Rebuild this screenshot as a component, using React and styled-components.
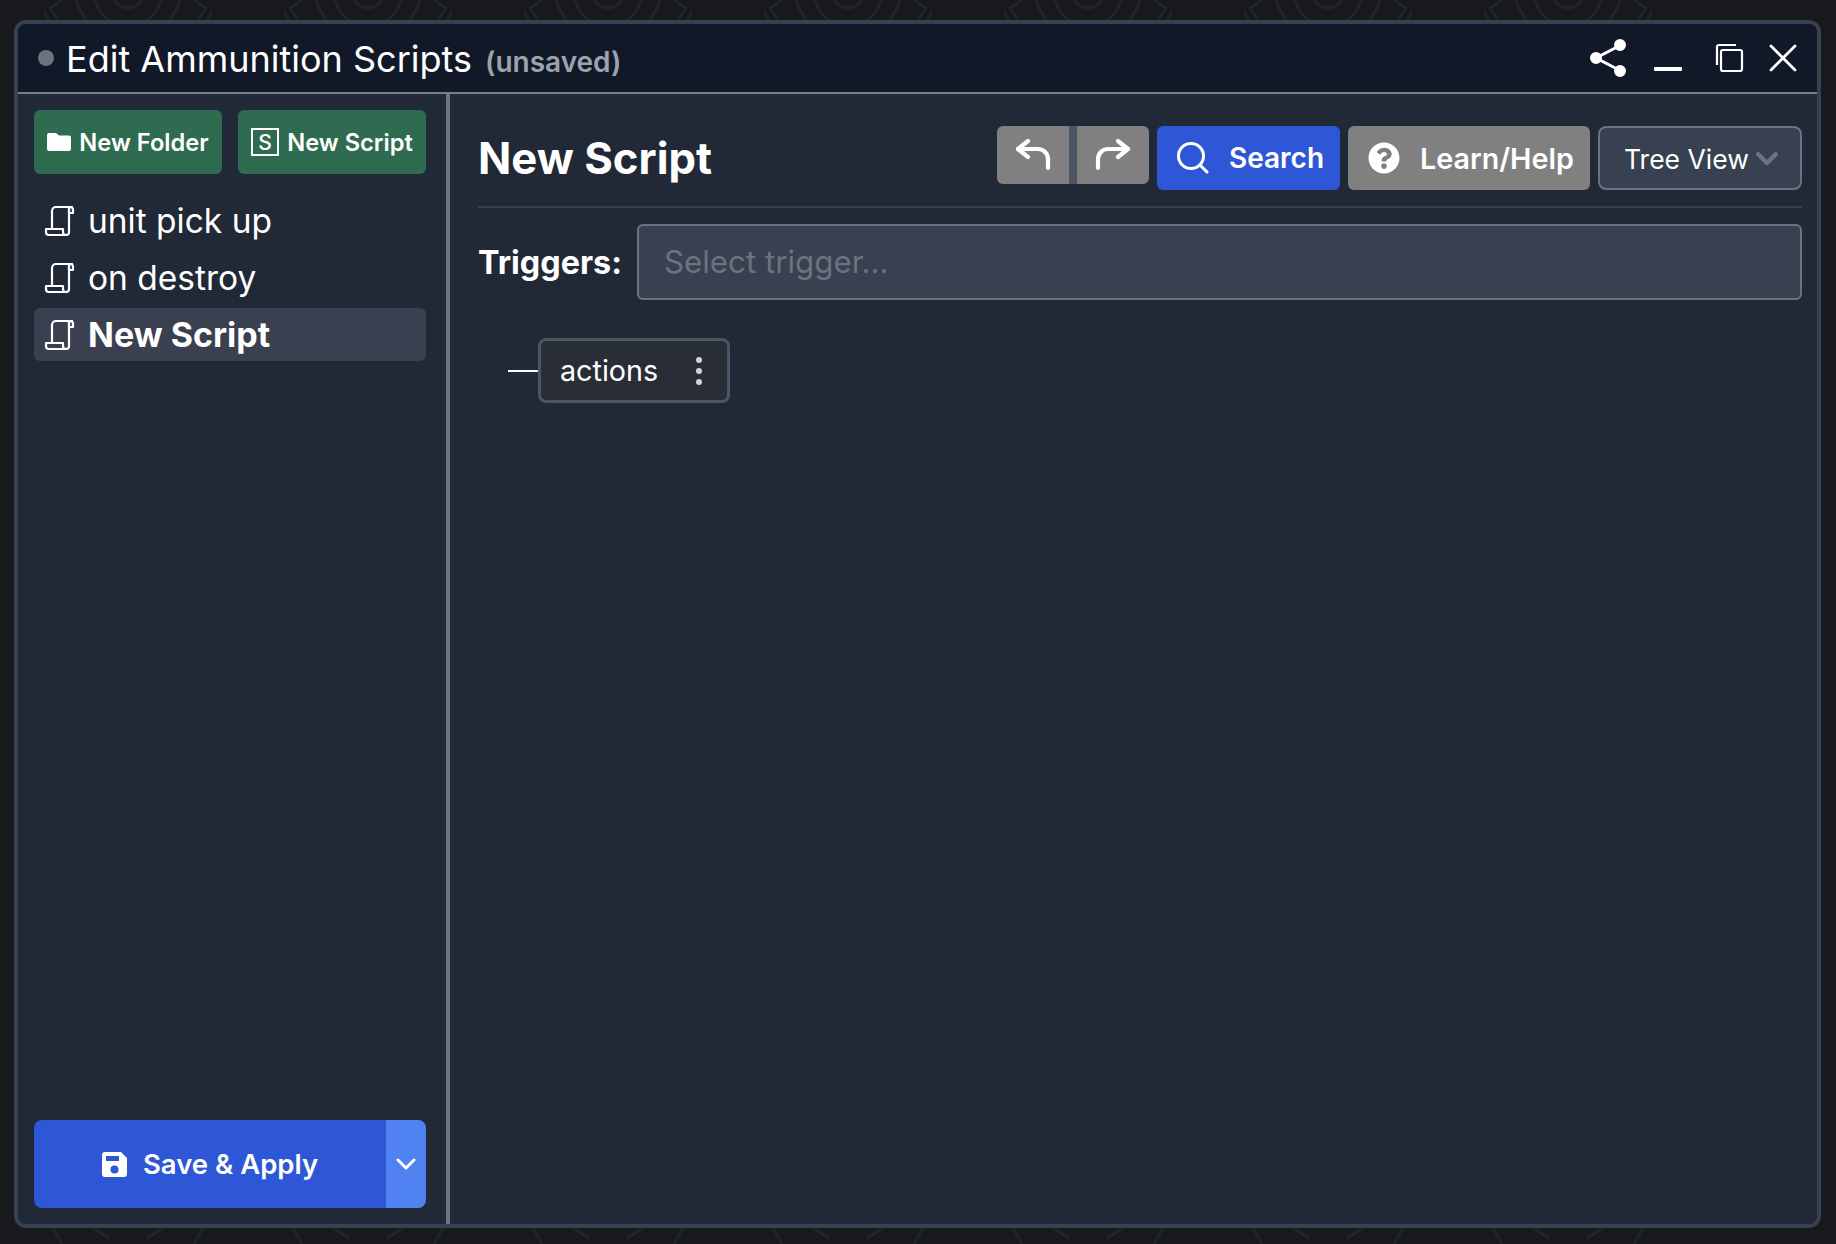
import React from "react";
import styled, { createGlobalStyle } from "styled-components";

const Global = createGlobalStyle`
  html, body { margin: 0; padding: 0; background: #17191c; }
  * { box-sizing: border-box; }
`;
const Page = styled.div`
  position: relative; width: 1836px; height: 1244px; padding: 20px 15px 16px 14px;
  font-family: Inter, "Liberation Sans", sans-serif; color: #fff; background: #17191c; overflow: hidden;
`;
const Pattern = styled.svg`position: absolute; inset: 0; width: 100%; height: 100%;`;
const Window = styled.div`
  position: relative; height: 100%; display: flex; flex-direction: column;
  border: 4px solid #374151; border-radius: 12px; background: #212836; overflow: hidden;
`;
const TitleBar = styled.header`
  height: 70px; flex: none; display: flex; align-items: center; padding: 0 20px 0 20px;
  background: #111827; border-bottom: 2px solid #7b7f85;
`;
const Dot = styled.span`width: 16px; height: 16px; border-radius: 50%; background: #6b7280; margin-right: 12px;`;
const Title = styled.h1`margin: 0; font-size: 36px; font-weight: 400; line-height: 44px; padding-top: 1px;`;
const Unsaved = styled.span`margin-left: 13px; font-size: 28px; font-weight: 600; color: #9ca3af; position: relative; top: 4px;`;
const WindowIcons = styled.div`margin-left: auto; display: flex; align-items: center;`;
const WindowIcon = styled.span`display: flex; margin-left: ${p => p.$ml}px;`;
const Body = styled.div`flex: 1; display: flex; min-height: 0;`;
const Sidebar = styled.aside`
  width: 432px; flex: none; display: flex; flex-direction: column; padding: 16px 20px 16px 16px;
  border-right: 4px solid #6b7280;
`;
const NewRow = styled.div`display: flex; gap: 16px; margin-bottom: 20px;`;
const GreenButton = styled.button`
  flex: 1; height: 64px; border: 0; border-radius: 6px; background: #2f6b50; color: #fff; padding: 0;
  display: flex; align-items: center; justify-content: center; gap: 8px;
  font: 600 23.700px Inter, sans-serif; white-space: nowrap;
`;
const SBox = styled.span`
  width: 28px; height: 28px; flex: none; border: 2px solid #fff; display: flex; align-items: center; justify-content: center;
  font-size: 21px; font-weight: 500;
`;
const Row = styled.div`
  height: 53px; margin-bottom: 4px; display: flex; align-items: center; gap: 12px; padding-left: 10px; border-radius: 6px;
  font-size: ${p => (p.$active ? 34 : 33.500)}px; font-weight: ${p => (p.$active ? 700 : 400)};
  background: ${p => (p.$active ? "#3a404f" : "transparent")};
`;
const Spacer = styled.div`flex: 1;`;
const Save = styled.div`height: 88px; display: flex; border-radius: 8px; overflow: hidden;`;
const SaveMain = styled.button`
  flex: 1; border: 0; background: #2d57d6; color: #fff; display: flex; align-items: center; justify-content: center; gap: 16px;
  font: 600 27.500px Inter, sans-serif; padding: 0;
`;
const SaveCaret = styled.button`width: 40px; border: 0; background: #5081f0; padding: 0; display: flex; align-items: center; justify-content: center;`;
const Main = styled.main`flex: 1; min-width: 0; padding: 32px 15px 0 28px;`;
const Head = styled.div`height: 82px; display: flex; align-items: flex-start; border-bottom: 2px solid #374151; margin-bottom: 16px;`;
const Heading = styled.h2`margin: 0; height: 64px; line-height: 66px; font-size: 43.700px; font-weight: 700;`;
const Tools = styled.div`margin-left: auto; display: flex; gap: 8px;`;
const UndoGroup = styled.div`display: flex; height: 58px; border-radius: 6px; overflow: hidden;`;
const UndoButton = styled.button`
  width: ${p => p.$w}px; border: 0; background: #808080; padding: 0; display: flex; align-items: center; justify-content: center;
`;
const Sep = styled.div`width: 8px; background: #4b5563;`;
const ActionButton = styled.button`
  height: 64px; width: ${p => p.$w}px; border: 0; border-radius: 6px; background: ${p => p.$bg}; color: #fff;
  display: flex; align-items: center; justify-content: center; gap: 20px; font: 600 ${p => p.$fs}px Inter, sans-serif; padding: 0 0 0 4px;
`;
const TreeSelect = styled.div`
  width: 204px; height: 64px; border: 2px solid #6b7280; border-radius: 8px; background: #374151;
  display: flex; align-items: center; gap: 7px; padding: 1px 0 0 24px; font-size: 26.500px;
`;
const TriggerRow = styled.div`display: flex; align-items: center; gap: 15px; margin-bottom: 38px;`;
const Label = styled.label`font-size: 32.300px; font-weight: 700;`;
const Input = styled.div`
  flex: 1; height: 76px; border: 2px solid #6b7280; border-radius: 6px; background: #3a404f;
  display: flex; align-items: center; padding-left: 25px; font-size: 31.300px; color: #6b7280;
`;
const TreeRow = styled.div`display: flex; align-items: center; padding-left: 30px;`;
const Line = styled.div`width: 30px; height: 2px; background: #fff;`;
const Node = styled.div`
  width: 192px; height: 65px; border: 3px solid #4b5563; border-radius: 8px; background: #292e36;
  display: flex; align-items: center; justify-content: space-between; padding: 0 25px 0 19px; font-size: 28.700px;
`;
const Dots = styled.div`display: flex; flex-direction: column; gap: 5px;`;
const NodeDot = styled.span`width: 6px; height: 6px; border-radius: 50%; background: #d1d5db;`;

const Scroll = () => (
  <svg width="32" height="30" viewBox="0 0 32 30" fill="none" stroke="#fff" strokeWidth="2.200" strokeLinejoin="round" strokeLinecap="round">
    <path d="M8 23V5a4 4 0 0 1 4-4h16" />
    <path d="M25 1c2 0 4 0 4 2.500V7h-4V2" />
    <path d="M25 2v18" />
    <path d="M2 23h17v3a3 3 0 0 0 3 3H5a3 3 0 0 1-3-3z" />
    <path d="M22 29c2 0 3-1.500 3-3v-6" />
  </svg>
);
const Folder = () => (
  <svg width="24" height="18" viewBox="0 0 24 18"><path fill="#fff" d="M2 0h7l3 2.500h10a2 2 0 0 1 2 2V16a2 2 0 0 1-2 2H2a2 2 0 0 1-2-2V2a2 2 0 0 1 2-2z" /></svg>
);
const Share = () => (
  <svg width="38" height="40" viewBox="0 0 38 40" fill="#fff" stroke="#fff" strokeWidth="3">
    <path d="M32 7 7 20l25 13" fill="none" />
    <circle cx="31" cy="7" r="4.500" /><circle cx="7" cy="20" r="4.500" /><circle cx="31" cy="33" r="4.500" />
  </svg>
);
const Minimize = () => (
  <svg width="28" height="40" viewBox="0 0 28 40"><rect y="29" width="28" height="4" rx="1" fill="#fff" /></svg>
);
const Copy = () => (
  <svg width="30" height="30" viewBox="0 0 30 30" fill="none" stroke="#fff" strokeWidth="2.200">
    <rect x="7" y="7" width="21" height="21" rx="2" />
    <path d="M3 22V4a2 2 0 0 1 2-2h17" />
  </svg>
);
const Close = () => (
  <svg width="28" height="28" viewBox="0 0 28 28" stroke="#fff" strokeWidth="2.800" strokeLinecap="round"><path d="m2 2 24 24M26 2 2 26" /></svg>
);
const Undo = () => (
  <svg width="36" height="32" viewBox="0 0 36 32" fill="none" stroke="#fff" strokeWidth="4.200" strokeLinecap="round" strokeLinejoin="round">
    <path d="M13 2 3 10l10 8" /><path d="M3 10h20a10 10 0 0 1 10 10v9" />
  </svg>
);
const Redo = () => (
  <svg width="36" height="32" viewBox="0 0 36 32" fill="none" stroke="#fff" strokeWidth="4.200" strokeLinecap="round" strokeLinejoin="round">
    <path d="m23 2 10 8-10 8" /><path d="M33 10H13A10 10 0 0 0 3 20v9" />
  </svg>
);
const SearchIcon = () => (
  <svg width="32" height="32" viewBox="0 0 32 32" fill="none" stroke="#fff" strokeWidth="3" strokeLinecap="round"><circle cx="14" cy="14" r="12.500" /><path d="m23 23 7 7" /></svg>
);
const Help = () => (
  <svg width="32" height="32" viewBox="0 0 512 512"><path fill="#fff" d="M504 256c0 137-111 248-248 248S8 393 8 256 119 8 256 8s248 111 248 248zM262.700 90c-54.500 0-89.300 23-116.500 63.800-3.500 5.300-2.400 12.400 2.700 16.300l34.700 26.300c5.200 3.900 12.600 3 16.700-2.100 17.900-22.700 30.100-35.800 57.300-35.800 20.400 0 45.700 13.100 45.700 32.900 0 15-12.400 22.700-32.500 34-23.500 13.200-54.600 29.600-54.600 70.600V300c0 6.600 5.400 12 12 12h56c6.600 0 12-5.400 12-12v-1.300c0-28.400 83-29.600 83-106.700 0-58-60.200-102-116.500-102zM256 338c-25.400 0-46 20.600-46 46s20.600 46 46 46 46-20.600 46-46-20.600-46-46-46z" /></svg>
);
const Floppy = () => (
  <svg width="25" height="25" viewBox="0 0 25 25"><path fill="#fff" fillRule="evenodd" d="M3 0h16l6 6v16a3 3 0 0 1-3 3H3a3 3 0 0 1-3-3V3a3 3 0 0 1 3-3zm1 4v5h13V4zm8.500 9.500a4 4 0 1 0 0 8 4 4 0 0 0 0-8z" /></svg>
);
const Chevron = ({ color = "#fff", w = 20, sw = 3 }) => (
  <svg width={w} height={w * 0.6} viewBox="0 0 20 12" fill="none" stroke={color} strokeWidth={sw} strokeLinecap="round" strokeLinejoin="round"><path d="m2 2 8 8 8-8" /></svg>
);

const tiles = [];
for (let y = -8; y < 1300; y += 240) {
  for (let x = 8; x < 1900; x += 240) tiles.push([x - 240, y]);
}

export default function App() {
  return (
    <Page>
      <Global />
      <Pattern aria-hidden="true">
        {tiles.map(([x, y]) => (
          <g key={`${x}-${y}`} transform={`translate(${x + 120} ${y})`} fill="none" stroke="#212428" strokeWidth="3">
            <circle r="34" /><circle r="16" />
            <path d="M-56-6c4 24 18 44 38 52M56-6c-4 24-18 44-38 52" />
            <path d="M-66 8l-12 8 8 12M66 8l12 8-8 12" />
            <path d="M-84 20-60 62-30 74M84 20 60 62 30 74" />
          </g>
        ))}
      </Pattern>
      <Window>
        <TitleBar>
          <Dot />
          <Title>Edit Ammunition Scripts</Title>
          <Unsaved>(unsaved)</Unsaved>
          <WindowIcons>
            <WindowIcon $ml={0}><Share /></WindowIcon>
            <WindowIcon $ml={27}><Minimize /></WindowIcon>
            <WindowIcon $ml={32}><Copy /></WindowIcon>
            <WindowIcon $ml={25}><Close /></WindowIcon>
          </WindowIcons>
        </TitleBar>
        <Body>
          <Sidebar>
            <NewRow>
              <GreenButton><Folder />New Folder</GreenButton>
              <GreenButton><SBox>S</SBox>New Script</GreenButton>
            </NewRow>
            <Row><Scroll />unit pick up</Row>
            <Row><Scroll />on destroy</Row>
            <Row $active><Scroll />New Script</Row>
            <Spacer />
            <Save>
              <SaveMain><Floppy />Save &amp; Apply</SaveMain>
              <SaveCaret><Chevron /></SaveCaret>
            </Save>
          </Sidebar>
          <Main>
            <Head>
              <Heading>New Script</Heading>
              <Tools>
                <UndoGroup>
                  <UndoButton $w={72}><Undo /></UndoButton>
                  <Sep />
                  <UndoButton $w={72}><Redo /></UndoButton>
                </UndoGroup>
                <ActionButton $w={183} $bg="#2d57d6" $fs={28}><SearchIcon />Search</ActionButton>
                <ActionButton $w={242} $bg="#808080" $fs={28.700}><Help />Learn/Help</ActionButton>
                <TreeSelect>Tree View<Chevron color="#6b7280" w={22} sw={4} /></TreeSelect>
              </Tools>
            </Head>
            <TriggerRow>
              <Label>Triggers:</Label>
              <Input>Select trigger...</Input>
            </TriggerRow>
            <TreeRow>
              <Line />
              <Node>actions<Dots><NodeDot /><NodeDot /><NodeDot /></Dots></Node>
            </TreeRow>
          </Main>
        </Body>
      </Window>
    </Page>
  );
}
